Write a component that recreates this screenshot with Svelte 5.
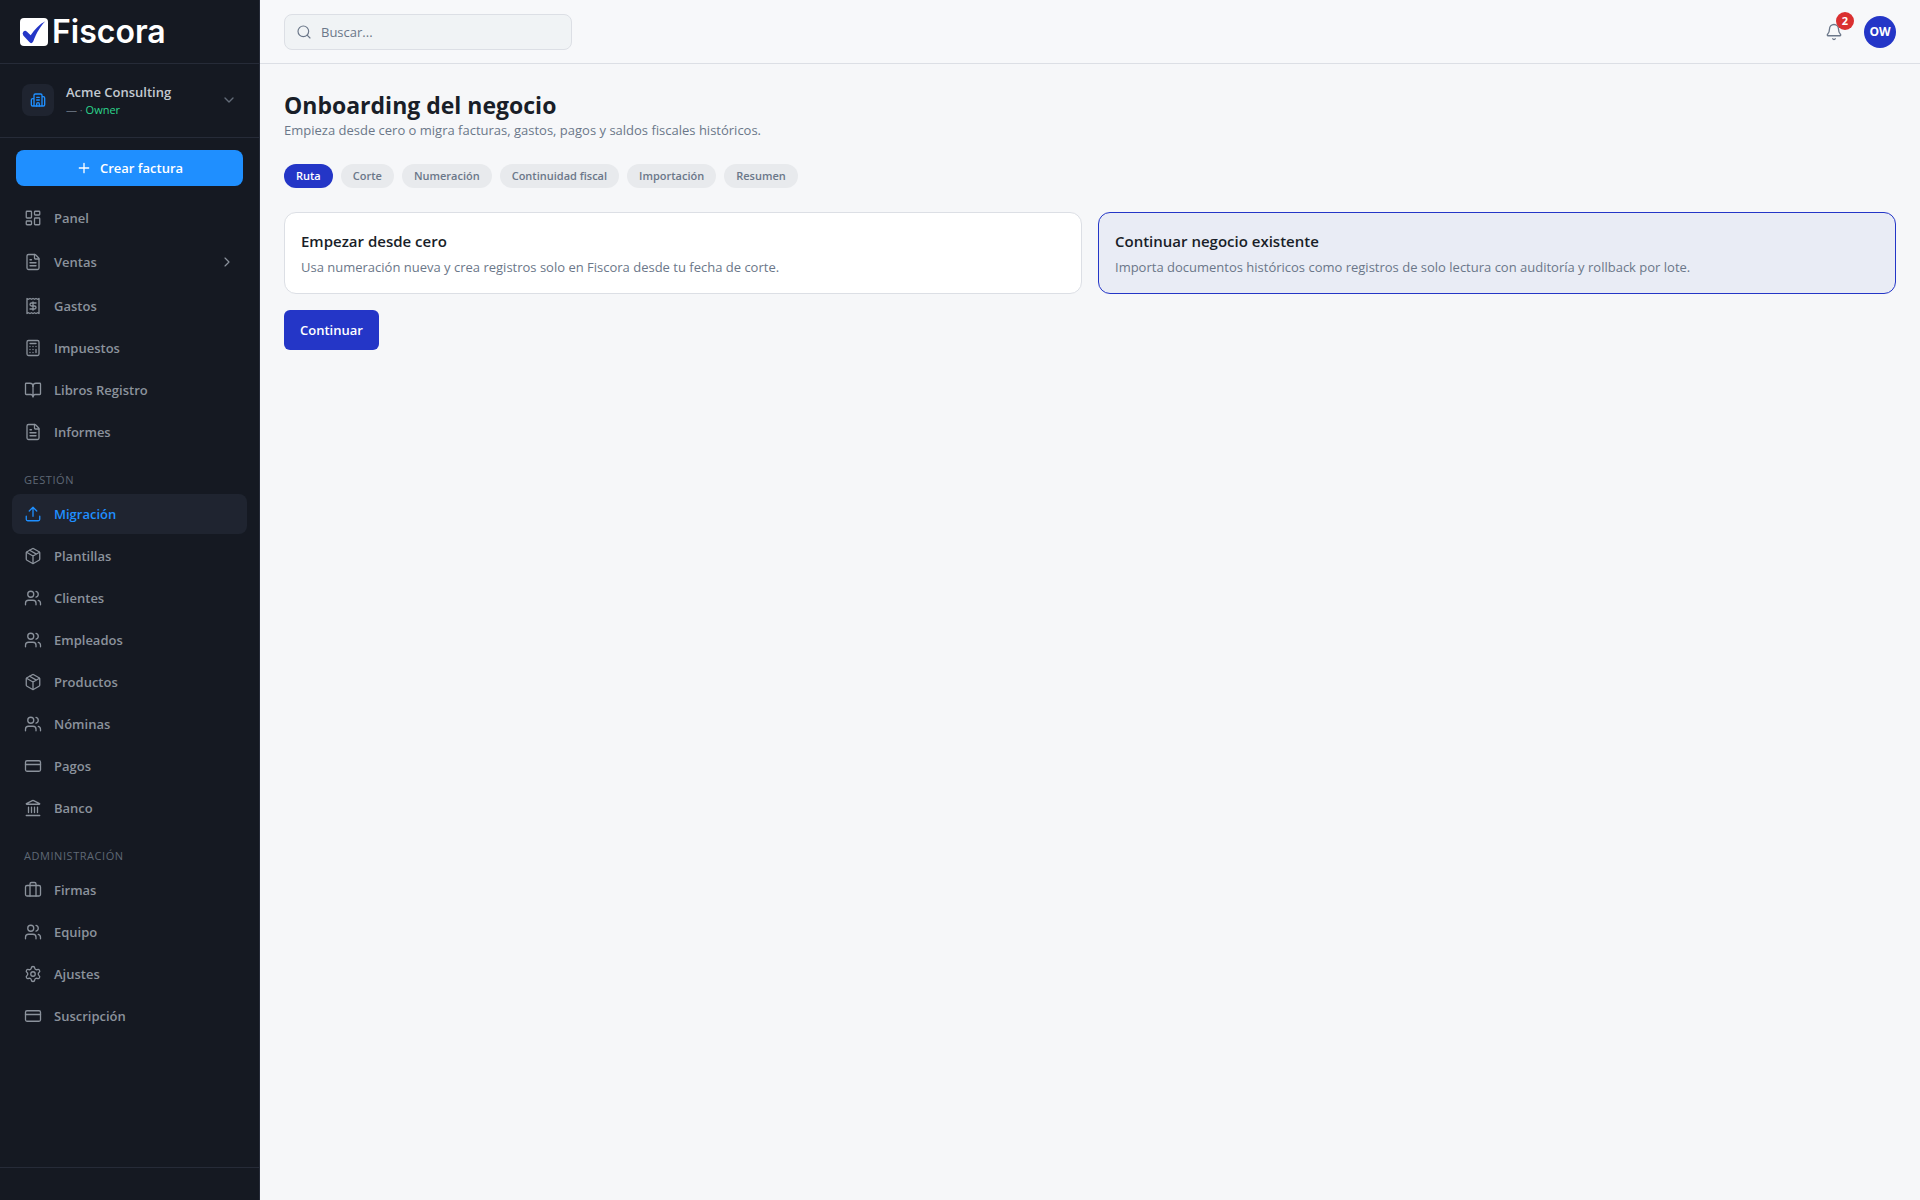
<script>
  const icons = {
    panel: '<rect width="7" height="9" x="3" y="3" rx="1"/><rect width="7" height="5" x="14" y="3" rx="1"/><rect width="7" height="9" x="14" y="12" rx="1"/><rect width="7" height="5" x="3" y="16" rx="1"/>',
    file: '<path d="M6 22a2 2 0 0 1-2-2V4a2 2 0 0 1 2-2h8a2.4 2.4 0 0 1 1.704.706l3.588 3.588A2.4 2.4 0 0 1 20 8v12a2 2 0 0 1-2 2z"/><path d="M14 2v5a1 1 0 0 0 1 1h5M10 9H8M16 13H8M16 17H8"/>',
    receipt: '<path d="M4 2v20l2-1 2 1 2-1 2 1 2-1 2 1 2-1 2 1V2l-2 1-2-1-2 1-2-1-2 1-2-1-2 1Z"/><path d="M16 8h-6a2 2 0 1 0 0 4h4a2 2 0 1 1 0 4H8M12 17.5v-11"/>',
    calculator: '<rect width="16" height="20" x="4" y="2" rx="2"/><path d="M8 6h8M16 14v4M16 10h.01M12 10h.01M8 10h.01M12 14h.01M8 14h.01M12 18h.01M8 18h.01"/>',
    book: '<path d="M12 7v14"/><path d="M3 18a1 1 0 0 1-1-1V4a1 1 0 0 1 1-1h5a4 4 0 0 1 4 4 4 4 0 0 1 4-4h5a1 1 0 0 1 1 1v13a1 1 0 0 1-1 1h-6a3 3 0 0 0-3 3 3 3 0 0 0-3-3z"/>',
    upload: '<path d="M12 3v12M17 8l-5-5-5 5M21 15v4a2 2 0 0 1-2 2H5a2 2 0 0 1-2-2v-4"/>',
    box: '<path d="M11 21.73a2 2 0 0 0 2 0l7-4A2 2 0 0 0 21 16V8a2 2 0 0 0-1-1.73l-7-4a2 2 0 0 0-2 0l-7 4A2 2 0 0 0 3 8v8a2 2 0 0 0 1 1.73z"/><path d="M12 22V12M3.29 7 12 12l8.71-5M7.5 4.27l9 5.15"/>',
    users: '<path d="M16 21v-2a4 4 0 0 0-4-4H6a4 4 0 0 0-4 4v2M16 3.128a4 4 0 0 1 0 7.744M22 21v-2a4 4 0 0 0-3-3.87"/><circle cx="9" cy="7" r="4"/>',
    card: '<rect width="20" height="14" x="2" y="5" rx="2"/><path d="M2 10h20"/>',
    bank: '<path d="M11.12 2.198a2 2 0 0 1 1.76.006l7.866 3.847c.476.233.31.949-.22.949H3.474c-.53 0-.695-.716-.22-.949z"/><path d="M6 18v-7M10 18v-7M14 18v-7M18 18v-7M3 22h18"/>',
    briefcase: '<path d="M16 20V4a2 2 0 0 0-2-2h-4a2 2 0 0 0-2 2v16"/><rect width="20" height="14" x="2" y="6" rx="2"/>',
    gear: '<path d="M9.671 4.136a2.34 2.34 0 0 1 4.659 0 2.34 2.34 0 0 0 3.319 1.915 2.34 2.34 0 0 1 2.33 4.033 2.34 2.34 0 0 0 0 3.831 2.34 2.34 0 0 1-2.33 4.033 2.34 2.34 0 0 0-3.319 1.915 2.34 2.34 0 0 1-4.659 0 2.34 2.34 0 0 0-3.32-1.915 2.34 2.34 0 0 1-2.33-4.033 2.34 2.34 0 0 0 0-3.831A2.34 2.34 0 0 1 6.35 6.051a2.34 2.34 0 0 0 3.319-1.915"/><circle cx="12" cy="12" r="3"/>',
    building: '<path d="M10 12h4M10 8h4M14 21v-3a2 2 0 0 0-4 0v3"/><path d="M6 10H4a2 2 0 0 0-2 2v7a2 2 0 0 0 2 2h16a2 2 0 0 0 2-2V9a2 2 0 0 0-2-2h-2M6 21V5a2 2 0 0 1 2-2h8a2 2 0 0 1 2 2v16"/>',
    plus: '<path d="M5 12h14M12 5v14"/>',
    down: '<path d="m6 9 6 6 6-6"/>',
    right: '<path d="m9 18 6-6-6-6"/>',
    search: '<path d="m21 21-4.34-4.34"/><circle cx="11" cy="11" r="8"/>',
    bell: '<path d="M10.268 21a2 2 0 0 0 3.464 0M3.262 15.326A1 1 0 0 0 4 17h16a1 1 0 0 0 .74-1.673C19.41 13.956 18 12.499 18 8A6 6 0 0 0 6 8c0 4.499-1.411 5.956-2.738 7.326"/>'
  };

  const groups = [
    { title: '', items: [
      ['panel', 'Panel'], ['file', 'Ventas', true], ['receipt', 'Gastos'],
      ['calculator', 'Impuestos'], ['book', 'Libros Registro'], ['file', 'Informes']
    ] },
    { title: 'Gestión', items: [
      ['upload', 'Migración'], ['box', 'Plantillas'], ['users', 'Clientes'], ['users', 'Empleados'],
      ['box', 'Productos'], ['users', 'Nóminas'], ['card', 'Pagos'], ['bank', 'Banco']
    ] },
    { title: 'Administración', items: [
      ['briefcase', 'Firmas'], ['users', 'Equipo'], ['gear', 'Ajustes'], ['card', 'Suscripción']
    ] }
  ];

  const steps = ['Ruta', 'Corte', 'Numeración', 'Continuidad fiscal', 'Importación', 'Resumen'];
  const routes = [
    ['Empezar desde cero', 'Usa numeración nueva y crea registros solo en Fiscora desde tu fecha de corte.'],
    ['Continuar negocio existente', 'Importa documentos históricos como registros de solo lectura con auditoría y rollback por lote.']
  ];
  let step = $state(0);
  let route = $state(1);
</script>

{#snippet icon(name, size)}
  <svg width={size} height={size} viewBox="0 0 24 24" aria-hidden="true">{@html icons[name]}</svg>
{/snippet}

<div class="app">
  <aside>
    <a class="brand" href="#inicio">
      <svg class="mark" width="28" height="28" viewBox="0 0 28 28" aria-hidden="true">
        <rect width="28" height="28" rx="4" fill="#fff" />
        <path d="M25.4 3.2C21.300 7 16.600 14.400 13.200 23.400Q11.400 26.600 9.300 24.100L3.300 17.400Q1.800 15.100 3.500 13.500Q5.300 12.100 7 13.800L10.700 17.300C14.600 11.300 19.400 6.200 25.400 3.200Z" fill="#2436c7" />
      </svg>
      <span>Fiscora</span>
    </a>

    <div class="company">
      <button class="switcher">
        <span class="tile">{@render icon('building', 16)}</span>
        <span class="who">
          <strong>Acme Consulting</strong>
          <small>— · <em>Owner</em></small>
        </span>
        {@render icon('down', 16)}
      </button>
    </div>

    <button class="create">{@render icon('plus', 16)}Crear factura</button>

    <nav>
      {#each groups as group}
        {#if group.title}<h2>{group.title}</h2>{/if}
        <ul>
          {#each group.items as [glyph, label, expandable]}
            <li>
              {#if expandable}
                <button class="item tall">{@render icon(glyph, 18)}<span>{label}</span>{@render icon('right', 16)}</button>
              {:else}
                <a class="item" class:active={label === 'Migración'} href="#{label}">{@render icon(glyph, 18)}<span>{label}</span></a>
              {/if}
            </li>
          {/each}
        </ul>
      {/each}
    </nav>
    <div class="foot"></div>
  </aside>

  <div class="page">
    <header>
      <label class="search">
        {@render icon('search', 16)}
        <input type="search" placeholder="Buscar..." aria-label="Buscar" />
      </label>
      <div class="tools">
        <button class="bell" aria-label="Notificaciones">{@render icon('bell', 18)}<span class="badge">2</span></button>
        <button class="avatar">OW</button>
      </div>
    </header>

    <main>
      <h1>Onboarding del negocio</h1>
      <p class="lead">Empieza desde cero o migra facturas, gastos, pagos y saldos fiscales históricos.</p>
      <div class="steps">
        {#each steps as name, i}
          <button class:on={i === step} onclick={() => (step = i)}>{name}</button>
        {/each}
      </div>
      <div class="routes">
        {#each routes as [title, text], i}
          <button class="route" class:chosen={i === route} onclick={() => (route = i)}>
            <strong>{title}</strong>
            <span>{text}</span>
          </button>
        {/each}
      </div>
      <button class="next">Continuar</button>
    </main>
  </div>
</div>

<style>
  :global(body) {
    background: #f6f7f9;
  }
  .app {
    display: flex;
    min-height: 100vh;
    font-family: "Open Sans", "Noto Sans", sans-serif;
    font-size: 13px;
    line-height: 20px;
    color: #6b7789;
  }
  .app * {
    box-sizing: border-box;
  }
  button, input {
    font: inherit;
    color: inherit;
    border: 0;
    background: none;
    padding: 0;
    margin: 0;
  }
  button {
    cursor: pointer;
  }
  a {
    color: inherit;
    text-decoration: none;
  }
  svg {
    flex: none;
    display: block;
    fill: none;
    stroke: currentColor;
    stroke-width: 2;
    stroke-linecap: round;
    stroke-linejoin: round;
  }
  aside {
    flex: none;
    display: flex;
    flex-direction: column;
    width: 260px;
    background: #151922;
    border-right: 1px solid #262b38;
    color: #8b929c;
  }
  .brand {
    display: flex;
    align-items: center;
    gap: 4px;
    height: 64px;
    padding: 0 20px;
    border-bottom: 1px solid #262b38;
    color: #fff;
    font-family: Inter, sans-serif;
    font-size: 32px;
    font-weight: 600;
    line-height: 32px;
  }
  .mark {
    stroke: none;
  }
  .company {
    padding: 12px 12px 13px;
    border-bottom: 1px solid #262b38;
  }
  .switcher {
    display: flex;
    align-items: center;
    gap: 12px;
    width: 100%;
    height: 48px;
    padding: 0 10px;
    text-align: left;
    color: #626b78;
  }
  .tile {
    display: grid;
    place-items: center;
    width: 32px;
    height: 32px;
    border-radius: 8px;
    background: #1f2430;
    color: #1f8fff;
  }
  .who {
    flex: 1;
    display: grid;
  }
  .who strong {
    color: #c3c9d1;
    font-weight: 600;
    line-height: 20px;
  }
  .who small {
    font-size: 11px;
    line-height: 16px;
  }
  .who em {
    font-style: normal;
    color: #2cd68c;
  }
  .create {
    display: flex;
    align-items: center;
    justify-content: center;
    gap: 8px;
    height: 36px;
    margin: 12px 16px;
    border-radius: 8px;
    background: #1f8fff;
    color: #fff;
    font-weight: 600;
  }
  nav {
    flex: 1;
    padding: 0 12px;
  }
  ul {
    display: grid;
    gap: 2px;
    margin: 0;
    padding: 0;
    list-style: none;
  }
  h2 {
    margin: 20px 0 6px;
    padding: 0 12px;
    font-size: 11px;
    font-weight: 400;
    line-height: 16px;
    letter-spacing: 0.05em;
    text-transform: uppercase;
    color: #5f6875;
  }
  .item {
    display: flex;
    align-items: center;
    gap: 12px;
    width: 100%;
    height: 40px;
    padding: 0 12px;
    border-radius: 8px;
    font-weight: 600;
    text-align: left;
  }
  .item svg, .search svg, .bell svg {
    stroke-width: 1.75;
  }
  .item span {
    flex: 1;
  }
  .tall {
    height: 44px;
  }
  .active {
    background: #1f2430;
    color: #1f8fff;
  }
  .foot {
    height: 33px;
    border-top: 1px solid #262b38;
  }
  .page {
    flex: 1;
    min-width: 0;
  }
  header {
    display: flex;
    align-items: center;
    justify-content: space-between;
    height: 64px;
    padding: 0 24px;
    border-bottom: 1px solid #dcdfe5;
    background: #f7f8fa;
  }
  .search {
    display: flex;
    align-items: center;
    gap: 9px;
    width: 288px;
    height: 36px;
    padding: 0 11px;
    border: 1px solid #dcdfe5;
    border-radius: 8px;
    background: #f0f3f5;
  }
  .search input {
    flex: 1;
    min-width: 0;
    outline: 0;
  }
  .search input::placeholder {
    color: #6b7789;
    opacity: 1;
  }
  .tools {
    display: flex;
    align-items: center;
    gap: 12px;
  }
  .bell {
    position: relative;
    display: grid;
    place-items: center;
    width: 36px;
    height: 36px;
  }
  .badge {
    position: absolute;
    top: -2px;
    right: -2px;
    width: 18px;
    height: 18px;
    border-radius: 9px;
    background: #da3030;
    color: #fff;
    font-size: 11px;
    font-weight: 700;
    line-height: 18px;
  }
  .avatar {
    width: 32px;
    height: 32px;
    border-radius: 50%;
    background: #2436c7;
    color: #fff;
    font-size: 12px;
    font-weight: 700;
  }
  main {
    padding: 27px 24px;
  }
  h1 {
    margin: 0 0 1px;
    font-size: 23px;
    font-weight: 700;
    line-height: 28px;
    color: #191e28;
  }
  .lead {
    margin: 0 0 24px;
  }
  .steps {
    display: flex;
    flex-wrap: wrap;
    gap: 8px;
    margin-bottom: 24px;
  }
  .steps button {
    height: 24px;
    padding: 0 12px;
    border-radius: 12px;
    background: #e8eaed;
    font-size: 11px;
    font-weight: 600;
    line-height: 16px;
  }
  .steps .on {
    background: #2436c7;
    color: #fff;
  }
  .routes {
    display: grid;
    grid-template-columns: 1fr 1fr;
    gap: 16px;
    margin-bottom: 16px;
  }
  .route {
    display: grid;
    gap: 4px;
    padding: 16px;
    border: 1px solid #dcdfe5;
    border-radius: 12px;
    background: #fff;
    text-align: left;
  }
  .route strong {
    color: #191e28;
    font-size: 15px;
    font-weight: 600;
    line-height: 24px;
  }
  .chosen {
    border-color: #2436c7;
    background: #e9ecf5;
  }
  .next {
    height: 40px;
    padding: 0 16px;
    border-radius: 6px;
    background: #2436c7;
    color: #fff;
    font-weight: 600;
  }
</style>
